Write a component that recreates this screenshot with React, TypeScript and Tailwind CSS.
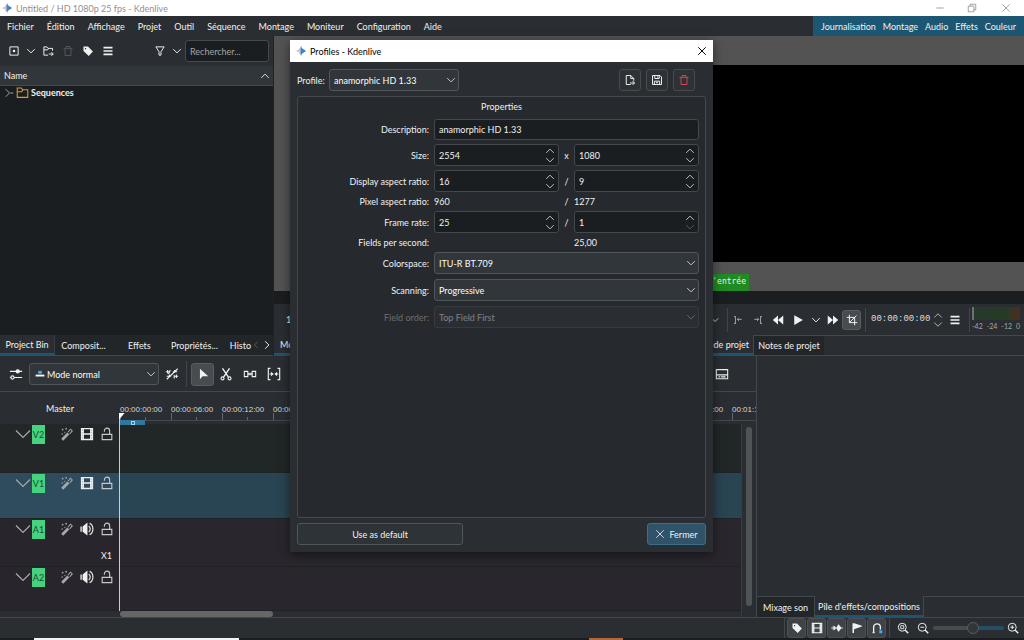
import { useState, type ReactNode } from "react";
import clsx from "clsx";

type IconProps = { children: ReactNode; className?: string; box?: number };

const Icon = ({ children, className = "size-3", box = 16 }: IconProps) => (
    <svg viewBox={`0 0 ${box} ${box}`} className={clsx("shrink-0", className)} fill="none" stroke="currentColor" strokeWidth="1.3" aria-hidden="true">
        {children}
    </svg>
);

const ChevronDown = ({ className = "size-3" }: { className?: string }) => (
    <Icon className={className}><path d="M3 5.500l5 5 5-5" /></Icon>
);

const Logo = () => (
    <Icon className="size-3">
        <path d="M3 8h4M5 4.500v2M5 9.500v2" stroke="#8fb4dd" strokeWidth="1.500" />
        <path d="M1 8h3M7 2v3M7 11v3" stroke="#e58b84" strokeWidth="1.500" />
        <path d="M6 3L13.500 8 6 13z" fill="#3f83c4" stroke="none" />
    </Icon>
);

const Menu = () => (
    <Icon><path d="M2 3.500h12M2 8h12M2 12.500h12" strokeWidth="2.200" /></Icon>
);

const Trash = () => (
    <Icon><path d="M2 4.500h12M5.500 4V2h5v2M4 5v9h8V5" /></Icon>
);

const Tag = () => (
    <Icon><path d="M2 2h6l6.500 6.500-5.500 6L2 8zM4 4v1.500h1.500V4z" fill="currentColor" fillRule="evenodd" stroke="none" /></Icon>
);

const Film = ({ className = "size-3" }: { className?: string }) => (
    <Icon className={className}>
        <path d="M1 1h14v14H1z M4.500 2.500v4.700h7V2.500z M4.500 8.800v4.700h7V8.800z" fill="currentColor" fillRule="evenodd" stroke="none" />
        <path d="M2.700 3v11M13.300 3v11" stroke="#8b8f91" strokeWidth="1" strokeDasharray="1 2" />
    </Icon>
);

const Wand = () => (
    <Icon className="size-3.5">
        <path d="M2.500 14.500L9.500 7.500" strokeWidth="3.200" />
        <path d="M9 6l3-3.500 2 2L11 8" strokeWidth="1.200" />
        <path d="M3 2v2M2 3h2M7 1v2M6 2h2M2.500 7v2M5.500 5.500v1.500" strokeWidth="1" />
    </Icon>
);

const Lock = () => (
    <Icon className="size-3.5">
        <path d="M2.500 8.500h11v6h-11z M5 5.500V4.500C5 .3 11 .3 11 4.500v4" />
    </Icon>
);

const Speaker = () => (
    <Icon className="size-3.5">
        <path d="M.5 5v6h1.500V5zM3 5v6l5.500 4.500V.500L3 5z" fill="currentColor" stroke="none" />
        <path d="M10 4.500c2.200 1.500 2.200 5.500 0 7M11 1.500c5 2.500 5 10.500 0 13" />
    </Icon>
);

const Magnifier = ({ children }: { children: ReactNode }) => (
    <Icon>
        <circle cx="7" cy="7" r="5.300" />
        <path d="M11 11l4 4" strokeWidth="1.800" />
        {children}
    </Icon>
);

const IconButton = ({ label, children, className = "w-5" }: { label: string; children: ReactNode; className?: string }) => (
    <button type="button" aria-label={label} className={clsx("flex h-5 shrink-0 items-center justify-center", className)}>
        {children}
    </button>
);

const Divider = ({ className = "h-6" }: { className?: string }) => <span className={clsx("w-px shrink-0 bg-[#41464a]", className)} />;

type ComboProps = { id: string; value: string; label?: string; disabled?: boolean; className?: string; wrap?: string };

const Combo = ({ id, value, label, disabled, className = "pl-1", wrap }: ComboProps) => (
    <div className={clsx("relative h-[22px]", wrap, disabled && "opacity-40")}>
        <select
            id={id}
            aria-label={label}
            disabled={disabled}
            defaultValue={value}
            className={clsx("h-full w-full appearance-none rounded-[3px] border border-[#50565a] bg-[#31363b] pr-5 text-[#fcfcfc] opacity-100", className)}
        >
            <option>{value}</option>
        </select>
        <span className="pointer-events-none absolute inset-y-0 right-0.5 flex items-center text-[#c8cacb]">
            <ChevronDown />
        </span>
    </div>
);

const Spin = ({ id, label, value, atMin }: { id: string; label?: string; value: string; atMin?: boolean }) => (
    <div className="flex h-[22px] min-w-0 items-center rounded-[3px] border border-[#43484c] bg-[#1b1e20] pr-0.5 pl-1">
        <input id={id} aria-label={label} defaultValue={value} className="w-full min-w-0 bg-transparent outline-none" />
        <div className="flex flex-col text-[#bfc2c3]">
            <button type="button" aria-label="Increase" className="flex h-[9px] items-center">
                <Icon className="size-3"><path d="M3 10.500l5-5 5 5" /></Icon>
            </button>
            <button type="button" aria-label="Decrease" className={clsx("flex h-[9px] items-center", atMin && "text-[#55595c]")}>
                <Icon className="size-3"><path d="M3 5.500l5 5 5-5" /></Icon>
            </button>
        </div>
    </div>
);

const FieldLabel = ({ htmlFor, children }: { htmlFor?: string; children: ReactNode }) =>
    htmlFor ? <label htmlFor={htmlFor} className="text-right">{children}</label> : <span className="text-right">{children}</span>;

const ProfilesDialog = () => (
    <div role="dialog" aria-label="Profiles - Kdenlive" className="absolute top-10 left-[290px] flex w-[423px] flex-col bg-[#2a2e32] shadow-[0_3px_10px_rgba(0,0,0,0.5)]">
        <div className="flex h-[22px] items-center bg-white pr-1 pl-1.5 text-black">
            <Logo />
            <h2 className="ml-0.5 flex-1">Profiles - Kdenlive</h2>
            <button type="button" aria-label="Close" className="flex size-3.5 items-center justify-center">
                <Icon className="size-3"><path d="M3 3l10 10M13 3L3 13" strokeWidth="1.300" /></Icon>
            </button>
        </div>
        <div className="flex items-center pt-[7px] pr-[18px] pl-[7px]">
            <label htmlFor="profile" className="w-8">Profile:</label>
            <Combo id="profile" value="anamorphic HD 1.33" wrap="w-[130px]" />
            <div className="ml-auto flex gap-[5px]">
                <button type="button" aria-label="New profile" className="flex size-[22px] items-center justify-center rounded-[3px] border border-[#454b4f] bg-[#2d3236]">
                    <Icon><path d="M9 14H3V2h6l4 4v3M9 2v4h4" /><path d="M8 12h6M11.500 9.500L14 12l-2.500 2.500" /></Icon>
                </button>
                <button type="button" aria-label="Save profile" className="flex size-[22px] items-center justify-center rounded-[3px] border border-[#454b4f] bg-[#2d3236]">
                    <Icon><path d="M2 2h10l2 2v10H2zM5 2v4h6V2M4.500 14V9.500h7V14M9 3v2M6.500 11.500h3" /></Icon>
                </button>
                <button type="button" aria-label="Delete profile" className="flex size-[22px] items-center justify-center rounded-[3px] border border-[#454b4f] bg-[#2d3236] text-[#da4453]">
                    <Trash />
                </button>
            </div>
        </div>
        <section className="mx-[7px] mt-[5px] flex min-h-[422px] flex-col rounded-[3px] border border-[#44494d] bg-[#26292d] px-1.5 pt-1">
            <h3 className="text-center">Properties</h3>
            <div className="mt-[7px] grid grid-cols-[125px_1fr_5px_1fr] items-center gap-x-[5px] gap-y-1">
                <FieldLabel htmlFor="description">Description:</FieldLabel>
                <input id="description" defaultValue="anamorphic HD 1.33" className="col-span-3 h-[21px] rounded-[3px] border border-[#43484c] bg-[#1b1e20] pl-1 outline-none" />
                <FieldLabel htmlFor="width">Size:</FieldLabel>
                <Spin id="width" value="2554" />
                <span className="text-center">x</span>
                <Spin id="height" label="Height" value="1080" />
                <FieldLabel htmlFor="dar">Display aspect ratio:</FieldLabel>
                <Spin id="dar" value="16" />
                <span className="text-center">/</span>
                <Spin id="dar-den" label="Display aspect denominator" value="9" />
                <FieldLabel>Pixel aspect ratio:</FieldLabel>
                <span>960</span>
                <span className="text-center">/</span>
                <span>1277</span>
                <FieldLabel htmlFor="fps">Frame rate:</FieldLabel>
                <Spin id="fps" value="25" />
                <span className="text-center">/</span>
                <Spin id="fps-den" label="Frame rate denominator" value="1" atMin />
                <FieldLabel>Fields per second:</FieldLabel>
                <span className="col-start-4">25,00</span>
                <FieldLabel htmlFor="colorspace">Colorspace:</FieldLabel>
                <Combo id="colorspace" value="ITU-R BT.709" wrap="col-span-3 mb-px" />
                <FieldLabel htmlFor="scanning">Scanning:</FieldLabel>
                <Combo id="scanning" value="Progressive" wrap="col-span-3 mb-px" />
                <label htmlFor="order" className="text-right text-[#6b6e71]">Field order:</label>
                <Combo id="order" value="Top Field First" disabled wrap="col-span-3" />
            </div>
        </section>
        <div className="flex justify-between px-[7px] pt-[5px] pb-[7px]">
            <button type="button" className="h-[22px] w-[166px] rounded-[3px] border border-[#50565a] bg-[#2e3337]">Use as default</button>
            <button type="button" className="flex h-[22px] w-[59px] items-center justify-center gap-1 rounded-[3px] border border-[#3a6f8d] bg-[#30536a]">
                <Icon className="size-2.5"><path d="M2 2l12 12M14 2L2 14" /></Icon>
                Fermer
            </button>
        </div>
    </div>
);

const ProjectBin = () => (
    <section className="flex w-[274px] shrink-0 flex-col border-r border-[#1f2225]">
        <div className="flex h-[30px] items-center pr-1 pl-1">
            <IconButton label="Add clip"><Icon><path d="M2.500 2.500h11v11h-11z" /><path d="M6.500 6.500h3v3h-3z" fill="currentColor" stroke="none" /></Icon></IconButton>
            <IconButton label="Add clip menu" className="w-[14px]"><ChevronDown /></IconButton>
            <IconButton label="Create folder"><Icon><path d="M8 13.500H2.500V2.500h4l1.500 2h6v3M2.500 6.500h5l1-1.500" /><path d="M9 12h6M12.500 9.500L15 12l-2.500 2.500" /></Icon></IconButton>
            <IconButton label="Delete"><span className="text-[#53575a]"><Trash /></span></IconButton>
            <IconButton label="Tags"><Tag /></IconButton>
            <IconButton label="Options"><Menu /></IconButton>
            <IconButton label="Filter" className="ml-auto w-[18px]"><Icon><path d="M2.500 2.500h11L9.300 9v4.500H6.700V9z" /></Icon></IconButton>
            <IconButton label="Filter menu" className="w-4"><ChevronDown /></IconButton>
            <input aria-label="Rechercher" placeholder="Rechercher..." className="h-[22px] w-[84px] rounded-[3px] border border-[#454a4e] bg-[#1b1e20] pl-1 outline-none placeholder:text-[#a1a4a6]" />
        </div>
        <div className="flex h-5 items-center justify-between border-b border-[#454a4e] bg-[#31363b] pr-0.5 pl-1">
            <span>Name</span>
            <Icon className="size-3"><path d="M3 10.500l5-5 5 5" strokeWidth="1.200" /></Icon>
        </div>
        <div className="flex-1 bg-[#1b1e20]">
            <div className="flex h-[13px] items-center">
                <Icon className="ml-0.5 size-3 text-[#a5a8a9]"><path d="M5 3l5 5-5 5M11 8h4" /></Icon>
                <Icon className="ml-0.5 size-[13px] text-[#d89b2e]"><path d="M1.500 14V2.500h5l1.500 2h6.500V14zM1.500 7h5.500l1.500-2" /></Icon>
                <span className="ml-0.5 font-bold">Sequences</span>
            </div>
        </div>
        <div className="flex h-[21px] border-b border-[#43484c] bg-[#232629]">
            <button type="button" className="w-14 border-r border-b-2 border-r-[#3a3f43] border-b-[#1d5673] bg-[#2a2e32]">Project Bin</button>
            <button type="button" className="w-[58px]">Composit...</button>
            <button type="button" className="w-14">Effets</button>
            <button type="button" className="w-14">Propriétés...</button>
            <button type="button" className="flex-1 pl-2 text-left whitespace-nowrap">Histo</button>
            <IconButton label="Previous tabs" className="w-2.5"><span className="text-[#63676a]"><Icon className="size-2.5"><path d="M10.500 3l-5 5 5 5" /></Icon></span></IconButton>
            <IconButton label="Next tabs" className="w-3"><Icon className="size-3"><path d="M5.500 3l5 5-5 5" /></Icon></IconButton>
        </div>
    </section>
);

const Monitors = () => (
    <section className="flex min-w-0 flex-1 flex-col">
        <div className="flex flex-1 flex-col bg-[#535353]">
            <div className="mt-[29px] ml-auto w-[calc(100%-80px)] flex-1 bg-black" />
            <div className="flex h-[29px] items-end justify-end">
                <span className="mr-[275px] h-[17px] bg-[#1f8b22] px-[3px] text-[8px] leading-[16px] [font-family:'DejaVu_Sans_Mono',monospace]">d'entrée</span>
            </div>
        </div>
        <div className="h-[13px] bg-[#1b1e20]" />
        <div className="flex h-[31px] items-center justify-end pr-1">
            <span className="mr-auto pl-3">1</span>
            <IconButton label="Resolution" className="w-4"><ChevronDown className="size-2.5" /></IconButton>
            <Divider className="ml-1 h-6" />
            <IconButton label="Set zone in"><span className="text-[#b5b8b9]"><Icon className="size-2.5"><path d="M4 2v12M1.500 2.500H4M1.500 13.500H4M14 7H7M9.500 4.500L7 7l2.500 2.500" /></Icon></span></IconButton>
            <IconButton label="Set zone out"><span className="text-[#b5b8b9]"><Icon className="size-2.5"><path d="M12 2v12M12 2.500h2.500M12 13.500h2.500M2 7h7M6.500 4.500L9 7 6.500 9.500" /></Icon></span></IconButton>
            <IconButton label="Rewind"><Icon className="size-3"><path d="M8 2v12L1 8zM15 2v12L8 8z" fill="currentColor" stroke="none" /></Icon></IconButton>
            <IconButton label="Play"><Icon className="size-3"><path d="M3 1.500L14.500 8 3 14.500z" fill="currentColor" stroke="none" /></Icon></IconButton>
            <IconButton label="Play menu" className="w-4"><ChevronDown /></IconButton>
            <IconButton label="Forward" className="w-[18px]"><Icon className="size-3"><path d="M1 2v12l7-6zM8 2v12l7-6z" fill="currentColor" stroke="none" /></Icon></IconButton>
            <IconButton label="Edit mode" className="w-[19px] rounded-[3px] border border-[#5a5e61] bg-[#484c50]"><Icon><path d="M4.500 1v10.500H15M1 4.500h10.500V15M4.500 11.500L14 2" strokeWidth="1.300" /></Icon></IconButton>
            <Divider className="ml-1 h-6" />
            <span className="ml-[5px] w-[60px] text-[9px] text-[#dcdddd] [font-family:'Liberation_Mono',monospace]">00:00:00:00</span>
            <div className="flex w-3.5 flex-col items-center text-[#b5b8b9]">
                <button type="button" aria-label="Next frame" className="flex h-2 items-center"><Icon className="size-3"><path d="M3 10l5-5 5 5" /></Icon></button>
                <button type="button" aria-label="Previous frame" className="flex h-2 items-center"><Icon className="size-3"><path d="M3 6l5 5 5-5" /></Icon></button>
            </div>
            <IconButton label="Monitor options" className="w-5"><Menu /></IconButton>
            <Divider className="ml-1 h-6" />
            <div className="ml-0.5 w-12">
                <div className="h-[13px] border-l-2 border-[#6d7072] bg-linear-to-r from-[#253a2b] via-[#263b25] via-70% to-[#4d2a22]" />
                <div className="flex h-3 items-center justify-between text-[7px] text-[#a4a7a8]">
                    <span>-42</span><span>-24</span><span>-12</span><span>0</span>
                </div>
            </div>
        </div>
        <div className="flex h-[21px] justify-between border-b border-[#43484c]">
            <button type="button" className="w-20 border-b-2 border-[#1d5673] pl-1.5 text-left">Moniteur</button>
            <div className="flex w-[351px]">
                <button type="button" className="w-20 border-b-2 border-[#1d5673] pr-1 text-right whitespace-nowrap">de projet</button>
                <div className="flex flex-1 border-t border-l border-[#43484c]">
                    <button type="button" className="w-[70px] bg-[#232629]">Notes de projet</button>
                </div>
            </div>
        </div>
    </section>
);

const tracks = [
    { name: "V2", head: "bg-[#232728]", lane: "bg-[#212627]", height: "h-[49px]" },
    { name: "V1", head: "bg-[#2f4b5e]", lane: "bg-[#294452]", height: "h-[46px]" },
    { name: "A1", head: "bg-[#28262c]", lane: "bg-[#29272d]", height: "h-12", extra: "X1" },
    { name: "A2", head: "bg-[#28262c]", lane: "bg-[#29272d]", height: "h-11" },
];

const ticks = ["00:00:00:00", "00:00:06:00", "00:00:12:00", "00:00:18:00", "00:00:24:00", "00:00:30:00", "00:00:36:00", "00:00:42:00", "00:00:48:00", "00:00:54:00", "00:01:00:00", "00:01:06:00", "00:01:12:00"];

const Timeline = () => (
    <section className="flex min-w-0 flex-1 flex-col border-r border-[#43484c]">
        <div className="flex h-9 items-center border-b border-[#43484c] pt-px pl-1.5">
            <IconButton label="Track settings"><Icon className="size-3.5"><path d="M1 5h14M1 12h14" /><circle cx="10" cy="5" r="1.800" fill="currentColor" /><circle cx="4" cy="12" r="1.800" fill="#2a2e32" /></Icon></IconButton>
            <div className="relative ml-[3px]">
                <Combo id="mode" label="Mode" value="Mode normal" wrap="w-[130px]" className="pl-[17px]" />
                <span className="pointer-events-none absolute inset-y-0 left-1.5 flex items-center">
                    <Icon className="size-2.5"><path d="M1 10.500h14" stroke="#fcfcfc" strokeWidth="3" /><path d="M5 3h6v4.500H5z" fill="#3daee9" stroke="none" /></Icon>
                </span>
            </div>
            <IconButton label="Use timeline zone" className="ml-[3px] w-5"><Icon className="size-3.5"><path d="M1 5.500h5M9 5.500h5M2 10.500h5M10 10.500h5M3 3.500v4M6 3.500L4 8M11 3.500v3M5 8.500v4M13 8.500v4M10.500 9v4M14.500 2L2 14" strokeWidth="1.200" /></Icon></IconButton>
            <Divider className="mx-1 h-[26px]" />
            <button type="button" aria-label="Selection tool" className="flex size-[23px] items-center justify-center rounded-[3px] border border-[#5a5e61] bg-[#484c50]">
                <Icon className="size-3.5"><path d="M4.500 2v12l3-3.500h6.500z" fill="currentColor" stroke="none" /></Icon>
            </button>
            <IconButton label="Razor tool" className="w-6"><Icon className="size-3.5"><path d="M4 1.500L10.800 11.500M12 1.500L5.200 11.500" strokeWidth="1.600" /><circle cx="4" cy="13" r="1.700" /><circle cx="12" cy="13" r="1.700" /></Icon></IconButton>
            <IconButton label="Spacer tool" className="w-6"><Icon className="size-3.5"><path d="M1.500 5h4v6h-4zM10.500 5h4v6h-4zM5.500 8h5M7 6.500v3M9 6.500v3" strokeWidth="1.200" /></Icon></IconButton>
            <IconButton label="Slip tool" className="w-6"><Icon className="size-3.5"><path d="M4 1.500H1.500v13H4M12 1.500h2.500v13H12M3 8h4M9 8h4" /><path d="M4.500 5.500v5L7.500 8zM11.500 5.500v5L8.500 8z" fill="currentColor" stroke="none" /></Icon></IconButton>
            <IconButton label="Edit subtitles" className="mr-6 ml-auto w-5"><Icon className="size-3.5"><path d="M1.500 3h13v10.500h-13zM1.500 9h13M4 11.300h2M7 11.300h5" strokeWidth="1.200" /></Icon></IconButton>
        </div>
        <div className="relative">
            <div className="flex h-8">
                <div className="flex w-[120px] shrink-0 items-center justify-center">Master</div>
                <div className="flex h-[29px] min-w-0 flex-1 overflow-hidden border-b border-[#43484c] pt-3 text-[8px] [font-family:'Liberation_Sans',sans-serif]">
                    {ticks.map((tick) => (
                        <div key={tick} className="relative w-[51px] shrink-0 text-[#d5d6d7]">
                            <span className="absolute bottom-0 left-0 h-[7px] w-px bg-[#63676a]" />
                            <span className="absolute bottom-0 left-[25px] h-[3px] w-px bg-[#63676a]" />
                            <span className="relative">{tick}</span>
                        </div>
                    ))}
                </div>
            </div>
            <div className="flex">
                <div className="min-w-0 flex-1">
                    {tracks.map((track) => (
                        <div key={track.name} className={clsx("flex", track.height)}>
                            <div className={clsx("flex w-[120px] shrink-0 flex-col justify-between border-b border-[#202326] pb-1", track.head)}>
                                <div className="flex items-center pl-[15px] text-[#a6a9aa]">
                                    <Icon className="size-4"><path d="M1 4.500l7 7 7-7" strokeWidth="1.200" /></Icon>
                                    <span className="ml-px flex h-[19px] w-[13px] items-center justify-center bg-[#45d37f] text-[#1c4a30]">{track.name}</span>
                                    <IconButton label="Effects" className="ml-3 w-5"><Wand /></IconButton>
                                    <IconButton label="Toggle track"><span className="text-[#eeefef]">{track.name.startsWith("V") ? <Film className="size-3.5" /> : <Speaker />}</span></IconButton>
                                    <IconButton label="Lock"><span className="text-[#c6c8c9]"><Lock /></span></IconButton>
                                </div>
                                {track.extra && <span className="pr-2 text-right leading-3">{track.extra}</span>}
                            </div>
                            <div className={clsx("flex-1 border-b border-[#202326]", track.lane)} />
                        </div>
                    ))}
                    <div className="h-1.5 pl-[120px]"><div className="h-full w-[153px] rounded-full bg-[#656767]" /></div>
                </div>
                <div className="flex w-[15px] border-l border-[#383d41] px-1 pt-[3px] pb-[11px]"><div className="w-1.5 rounded-full bg-[#505457]" /></div>
            </div>
            {/* playhead and timeline zone */}
            <div className="absolute top-[28px] left-[120px] flex h-[5px] w-[25px] items-center justify-center bg-[#30789f]"><span className="size-1 border border-[#a9d3ea]" /></div>
            <div className="absolute top-[21px] bottom-1.5 left-[119px] w-px bg-[#c9cacb]" />
            <Icon className="absolute top-[21px] left-[119px] size-[6px] text-white"><path d="M0 0h15L2 15H0z" fill="currentColor" stroke="none" /></Icon>
        </div>
    </section>
);

const EffectStack = () => (
    <section className="flex w-[267px] shrink-0 flex-col">
        <div className="flex-1" />
        <div className="flex h-[21px]">
            <button type="button" className="w-[58px] border-t border-r border-[#43484c] bg-[#232629]">Mixage son</button>
            <button type="button" className="w-[108px] border-b-2 border-[#1d5673] pt-px whitespace-nowrap">Pile d'effets/compositions</button>
            <div className="flex-1 border-t border-l border-[#43484c]" />
        </div>
    </section>
);

const StatusBar = () => {
    const [zoom, setZoom] = useState(58);
    const toggles = [
        { label: "Show tags", icon: <Tag /> },
        { label: "Show thumbnails", icon: <Film /> },
        { label: "Show audio", icon: <Icon><path d="M0 8h16M3 5v6M10 3.500L13.500 8 10 12.500 7.500 8zM4.500 5.500L6 8l-1.500 2.500z" fill="currentColor" strokeWidth="1" /></Icon> },
        { label: "Show markers", icon: <Icon><path d="M2 1.500h2.500L14.500 5v1L4 9.500V14.500H2z" fill="currentColor" stroke="none" /></Icon> },
        { label: "Snap", icon: <Icon><path d="M3.500 14V7c0-6 9-6 9 0v3" strokeWidth="1.800" /><path d="M2 14.200h3" strokeWidth="1.500" /><path d="M11 11h4v4h-4z" fill="#3daee9" stroke="none" /></Icon> },
    ];
    return (
        <footer className="flex h-[21px] items-center justify-end border-t border-[#43484c] pr-[3px]">
            <Divider className="mr-0.5 h-5" />
            <div className="flex gap-px">
                {toggles.map((t) => (
                    <IconButton key={t.label} label={t.label} className="w-[19px] rounded-[3px] border border-[#4c5054] bg-[#3f4347]">{t.icon}</IconButton>
                ))}
            </div>
            <Divider className="mx-[3px] h-5" />
            <IconButton label="Fit zoom"><Magnifier><path d="M5 5h4v4H5z" strokeWidth="1.200" /></Magnifier></IconButton>
            <IconButton label="Zoom out"><Magnifier><path d="M4.500 7h5" /></Magnifier></IconButton>
            <input
                type="range"
                aria-label="Zoom"
                value={zoom}
                onChange={(e) => setZoom(Number(e.target.value))}
                className="h-1 w-[71px] appearance-none rounded-full bg-linear-to-r from-[#474b4e] from-58% to-[#264e63] to-58% [&::-webkit-slider-thumb]:size-3 [&::-webkit-slider-thumb]:appearance-none [&::-webkit-slider-thumb]:rounded-full [&::-webkit-slider-thumb]:border [&::-webkit-slider-thumb]:border-[#5a5e61] [&::-webkit-slider-thumb]:bg-[#31363b]"
            />
            <IconButton label="Zoom in" className="w-[17px]"><Magnifier><path d="M4.500 7h5M7 4.500v5" /></Magnifier></IconButton>
        </footer>
    );
};

const menus = ["Fichier", "Édition", "Affichage", "Projet", "Outil", "Séquence", "Montage", "Moniteur", "Configuration", "Aide"];
const layouts = ["Journalisation", "Montage", "Audio", "Effets", "Couleur"];

const App = () => {
    return (
        <div className="relative flex min-h-screen w-full flex-col overflow-hidden bg-[#2a2e32] text-[9px] leading-[11px] text-[#f0f1f1] [font-family:'Lato','Noto_Sans',sans-serif]">
            <header className="flex h-4 items-center bg-white pl-0.5 text-[#8f8f8f]">
                <Logo />
                <h1 className="ml-0.5 flex-1">Untitled / HD 1080p 25 fps - Kdenlive</h1>
                <IconButton label="Minimize" className="w-8"><Icon className="size-2.5"><path d="M2 8h12" /></Icon></IconButton>
                <IconButton label="Restore" className="w-8"><Icon className="size-2.5"><path d="M2 5h9v9H2zM5 5V2h9v9h-3" /></Icon></IconButton>
                <IconButton label="Close window" className="w-9"><Icon className="size-2.5"><path d="M2 2l12 12M14 2L2 14" /></Icon></IconButton>
            </header>
            <nav className="flex h-5 items-center justify-between">
                <div className="flex gap-[13px] pl-[7px]">
                    {menus.map((m) => <button key={m} type="button">{m}</button>)}
                </div>
                <div className="flex h-full w-[211px] items-center justify-between bg-[#1d5673] px-2">
                    {layouts.map((l) => <button key={l} type="button">{l}</button>)}
                </div>
            </nav>
            <main className="flex flex-1 flex-col">
                <div className="flex flex-1">
                    <ProjectBin />
                    <Monitors />
                </div>
                <div className="flex">
                    <Timeline />
                    <EffectStack />
                </div>
            </main>
            <StatusBar />
            <div className="flex h-0.5 bg-[#1a1c1d]">
                <div className="ml-[34px] w-[205px] bg-[#f3f3f3]" />
                <div className="ml-[350px] w-[34px] bg-[#b4683a]" />
            </div>
            <ProfilesDialog />
        </div>
    );
};

export default App;
